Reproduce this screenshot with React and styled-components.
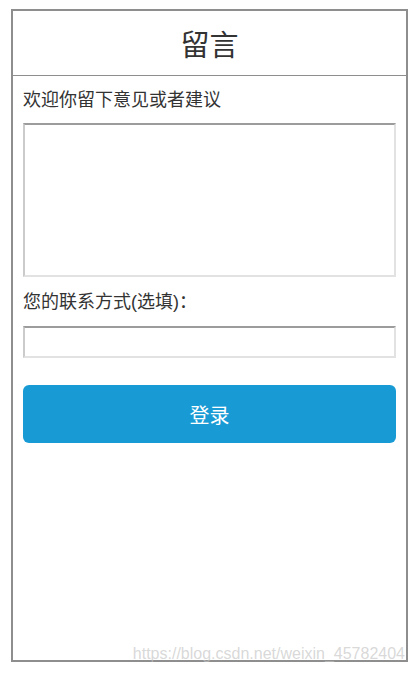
import React from 'react'
import styled, { createGlobalStyle } from 'styled-components';

const GlobalStyle = createGlobalStyle`
    body {
        margin: 0;
        background: #fff;
        font-family: "Liberation Sans", "Noto Sans CJK SC", sans-serif;
        color: #333;
    }
`;

const Page = styled.div`
    padding: 9px 8px 0 11px;
`;

const Frame = styled.div`
    position: relative;
    width: 397px;
    height: 653px;
    box-sizing: border-box;
    border: 2px solid #8e8e8e;
    display: flex;
    flex-direction: column;
`;

const Header = styled.div`
    height: 64px;
    border-bottom: 1px solid #8e8e8e;
    display: flex;
    align-items: center;
    justify-content: center;
`;

const Title = styled.h1`
    margin: 0;
    font-size: 29px;
    font-weight: 400;
    color: #333;
`;

const Form = styled.div`
    display: flex;
    flex-direction: column;
    padding: 12px 10px 0 10px;
`;

const Label = styled.label`
    font-size: 18px;
    line-height: 24px;
    color: #333;
    margin-bottom: ${p => p.$gap}px;
`;

const fieldBorder = `
    box-sizing: border-box;
    width: 100%;
    border-style: solid;
    border-width: 2px;
    border-color: #9c9c9c #e2e2e2 #e2e2e2 #cbcbcb;
    outline: none;
`;

const TextArea = styled.textarea`
    ${fieldBorder}
    height: 154px;
    resize: none;
    margin-bottom: 13px;
`;

const Input = styled.input`
    ${fieldBorder}
    height: 32px;
    margin-bottom: 27px;
`;

const Button = styled.button`
    height: 58px;
    border: none;
    border-radius: 6px;
    background-color: #189bd5;
    color: #fff;
    font-family: "Liberation Sans", "Noto Sans CJK SC", sans-serif;
    font-size: 20px;
    cursor: pointer;
`;

const Watermark = styled.span`
    position: absolute;
    right: 1px;
    bottom: -3px;
    font-family: "Liberation Sans", sans-serif;
    font-size: 16px;
    color: rgba(195, 195, 195, 0.65);
    pointer-events: none;
`;

const App = () => {
  return (
    <Page>
        <GlobalStyle/>
        <Frame>
            <Header>
                <Title>留言</Title>
            </Header>
            <Form>
                <Label $gap={11}>欢迎你留下意见或者建议</Label>
                <TextArea/>
                <Label $gap={12}>您的联系方式(选填)：</Label>
                <Input type="text"/>
                <Button>登录</Button>
            </Form>
            <Watermark>https://blog.csdn.net/weixin_45782404</Watermark>
        </Frame>
    </Page>
  )
}

export default App
